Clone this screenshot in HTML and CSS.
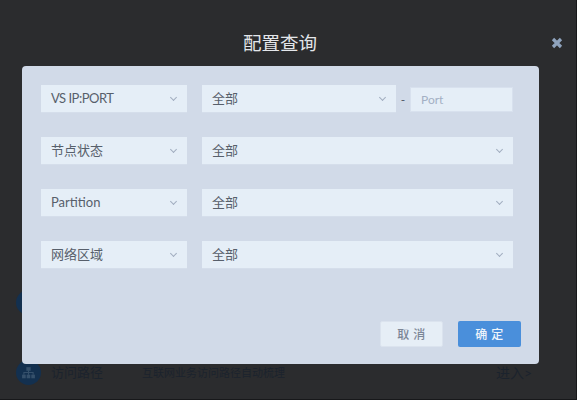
FILE: index.html
```html
<!DOCTYPE html>
<html>

<head>
  <meta charset="UTF-8">
  <link rel="stylesheet" href="styles.css">
</head>

<body>
  <div class="page">
    <div class="entry entry-first">
      <span class="entry-icon"></span>
    </div>
    <div class="entry">
      <span class="entry-icon">
        <svg viewBox="0 0 14 14" width="15" height="15">
          <rect x="5" y="2" width="4" height="3.4" fill="#35506b"/>
          <rect x="1" y="9" width="3.4" height="3.4" fill="#35506b"/>
          <rect x="5.3" y="9" width="3.4" height="3.4" fill="#35506b"/>
          <rect x="9.6" y="9" width="3.4" height="3.4" fill="#35506b"/>
          <path d="M7 5v4M2.7 9V7h8.6v2" stroke="#35506b" fill="none"/>
        </svg>
      </span>
      <span class="entry-name">访问路径</span>
      <span class="entry-desc">互联网业务访问路径自动梳理</span>
      <span class="entry-link">进入&gt;</span>
    </div>
  </div>

  <div class="overlay">
    <div class="title">配置查询</div>
    <div class="close">
      <svg viewBox="0 0 12 12" width="12" height="12">
        <path d="M2 2l8 8M10 2l-8 8" stroke="#8fa3bd" stroke-width="3.2" fill="none"/>
      </svg>
    </div>

    <div class="dialog">
      <div class="row">
        <div class="select select-key"><span class="tight">VS IP:PORT</span><i class="arrow"></i></div>
        <div class="select select-short"><span>全部</span><i class="arrow"></i></div>
        <span class="dash">-</span>
        <div class="port">Port</div>
      </div>
      <div class="row">
        <div class="select select-key"><span>节点状态</span><i class="arrow"></i></div>
        <div class="select select-wide"><span>全部</span><i class="arrow"></i></div>
      </div>
      <div class="row">
        <div class="select select-key"><span>Partition</span><i class="arrow"></i></div>
        <div class="select select-wide"><span>全部</span><i class="arrow"></i></div>
      </div>
      <div class="row">
        <div class="select select-key"><span>网络区域</span><i class="arrow"></i></div>
        <div class="select select-wide"><span>全部</span><i class="arrow"></i></div>
      </div>
      <div class="buttons">
        <button class="btn btn-cancel">取 消</button>
        <button class="btn btn-ok">确 定</button>
      </div>
    </div>
  </div>
</body>

</html>
```

FILE: styles.css
```css
html, body {
  margin: 0;
  height: 100%;
  overflow: hidden;
}
body {
  position: relative;
  width: 577px;
  height: 400px;
  background-color: #17181a;
  font-family: Lato, "Noto Sans CJK SC", sans-serif;
}

/* page behind the dialog */
.page {
  box-sizing: border-box;
  width: 576px;
  height: 399px;
  padding: 290px 0 0 16px;
  background-color: #2b2c2e;
}
.entry {
  display: flex;
  align-items: center;
  height: 25px;
  color: #1b232d;
}
.entry-first {
  margin-bottom: 45px;
}
.entry-icon {
  display: flex;
  align-items: center;
  justify-content: center;
  flex: none;
  width: 25px;
  height: 25px;
  border-radius: 50%;
  background-color: #13304f;
}
.entry-name {
  width: 91px;
  margin-left: 10px;
  padding-bottom: 2px;
  font-size: 13px;
}
.entry-desc {
  width: 354px;
  padding-bottom: 2px;
  font-size: 11px;
}
.entry-link {
  padding-bottom: 2px;
  font-size: 14px;
}

/* dialog */
.overlay {
  position: absolute;
  top: 0;
  left: 0;
  width: 576px;
  height: 399px;
}
.title {
  padding-top: 31px;
  padding-right: 16px;
  line-height: 24px;
  text-align: center;
  font-size: 18.5px;
  color: #e3e6ea;
}
.close {
  position: absolute;
  top: 37px;
  left: 551px;
}
.close svg {
  display: block;
}
.dialog {
  position: absolute;
  top: 66px;
  left: 22px;
  box-sizing: border-box;
  width: 517px;
  height: 298px;
  padding: 19px 26px 0 19px;
  border-radius: 4px;
  background-color: #d1dae8;
}
.row {
  display: flex;
  align-items: center;
  height: 28px;
  margin-bottom: 24px;
}
.select {
  display: flex;
  align-items: center;
  justify-content: space-between;
  box-sizing: border-box;
  height: 28px;
  padding: 0 11px 2px 10px;
  background-color: #e5eef7;
  border-bottom: 1px solid #d5deeb;
  font-size: 13px;
  color: #575f6b;
}
.select-key {
  width: 146px;
  margin-right: 15px;
}
.select-short {
  width: 194px;
}
.select-wide {
  width: 311px;
}
.tight {
  letter-spacing: -0.5px;
}
.arrow {
  flex: none;
  width: 4px;
  height: 4px;
  border-right: 1px solid #a2aec0;
  border-bottom: 1px solid #a2aec0;
  transform: rotate(45deg);
}
.dash {
  width: 14px;
  text-align: center;
  font-size: 12px;
  color: #4e5663;
}
.port {
  box-sizing: border-box;
  width: 103px;
  height: 25px;
  line-height: 23px;
  padding-left: 10px;
  background-color: #e5eef7;
  border: 1px solid #d8e1ee;
  font-size: 12px;
  color: #a3b0c4;
}
.buttons {
  display: flex;
  justify-content: flex-end;
  gap: 15px;
  margin-top: 52px;
  margin-right: -8px;
}
.btn {
  box-sizing: border-box;
  width: 63px;
  height: 26px;
  padding: 0 0 2px;
  border: 0;
  border-radius: 2px;
  font-family: inherit;
  font-size: 12px;
  font-weight: 500;
  letter-spacing: 0.5px;
}
.btn-cancel {
  background-color: #e6eef6;
  border: 1px solid #dbe3ee;
  color: #7c8696;
}
.btn-ok {
  background-color: #4a8fdb;
  color: #eef4fb;
}
```
